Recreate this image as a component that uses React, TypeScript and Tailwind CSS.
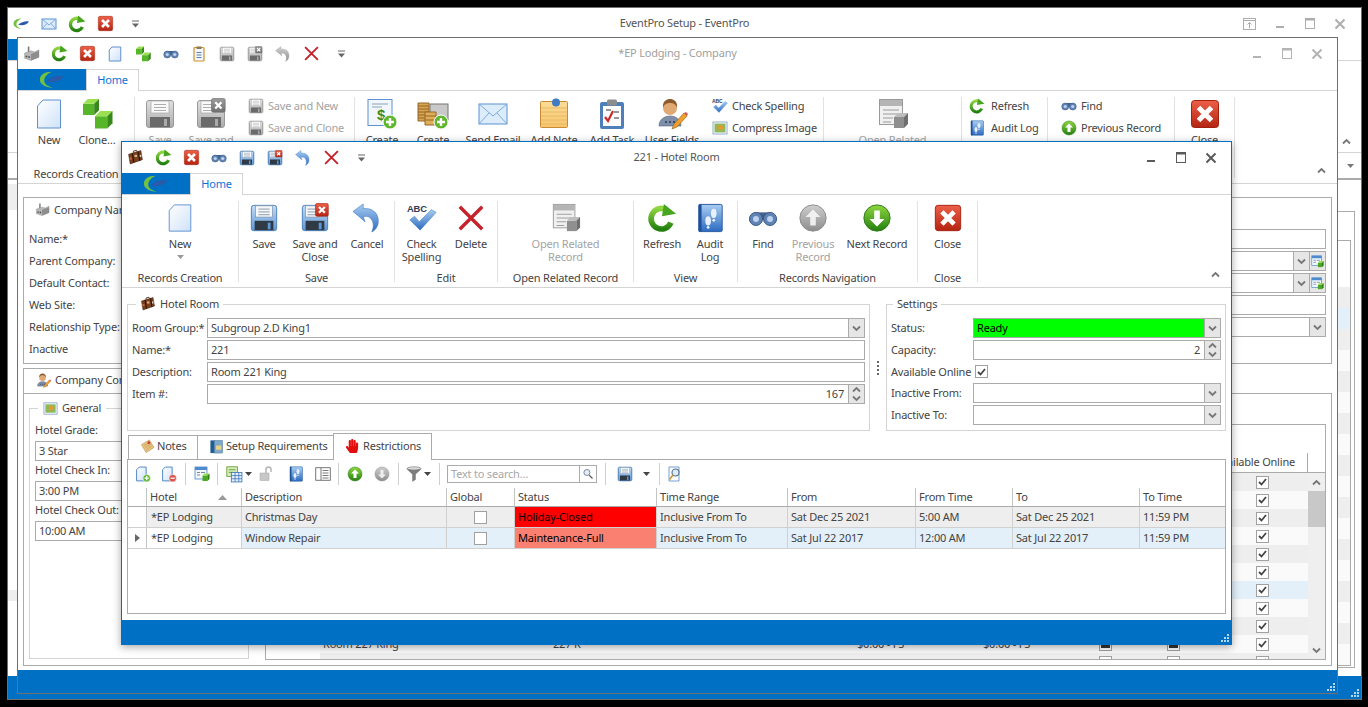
import { ReactNode } from "react";
import { FaHandPaper } from "react-icons/fa";

function Defs() {
  return (
    <svg className="absolute h-0 w-0">
      <defs>
        <linearGradient id="gPage" x1="0" y1="0" x2="1" y2="1">
          <stop offset="0" stopColor="#ffffff" />
          <stop offset="1" stopColor="#cfe2f8" />
        </linearGradient>
        <linearGradient id="gDisk" x1="0" y1="0" x2="0" y2="1">
          <stop offset="0" stopColor="#c4dcf5" />
          <stop offset="1" stopColor="#5e97d6" />
        </linearGradient>
        <linearGradient id="gRed" x1="0" y1="0" x2="0" y2="1">
          <stop offset="0" stopColor="#ee5f48" />
          <stop offset="1" stopColor="#b32412" />
        </linearGradient>
        <linearGradient id="gGreen" x1="0" y1="0" x2="0" y2="1">
          <stop offset="0" stopColor="#8fd63f" />
          <stop offset="1" stopColor="#23800f" />
        </linearGradient>
        <linearGradient id="gGray" x1="0" y1="0" x2="0" y2="1">
          <stop offset="0" stopColor="#cfcfcf" />
          <stop offset="1" stopColor="#8d8d8d" />
        </linearGradient>
        <linearGradient id="gBlue" x1="0" y1="0" x2="0" y2="1">
          <stop offset="0" stopColor="#a9cdf2" />
          <stop offset="1" stopColor="#2c6bc0" />
        </linearGradient>
        <linearGradient id="gNote" x1="0" y1="0" x2="0" y2="1">
          <stop offset="0" stopColor="#fbdc97" />
          <stop offset="1" stopColor="#f6c66c" />
        </linearGradient>
      </defs>
    </svg>
  );
}

type IconProps = { s?: number; off?: boolean };

// thin outlines vanish when the 32-unit drawings are shown at 16px
const line = (s = 32) => (s < 20 ? 2 : 1);

function Svg({ s = 32, off, children, vb = "0 0 32 32" }: IconProps & { children: ReactNode; vb?: string }) {
  return (
    <svg width={s} height={s} viewBox={vb} className={off ? "shrink-0 grayscale opacity-75" : "shrink-0"}>
      {children}
    </svg>
  );
}

const Logo = ({ w = 28 }: { w?: number }) => (
  <svg width={w} height={(w * 20) / 30} viewBox="0 0 30 20" className="shrink-0">
    <path d="M15 1C6 1 1 5 1 10c0 5 6 9 15 9-6-1-10-4-10-8 0-4 4-8 9-10Z" fill="#73c23d" />
    <path d="M9 12c5-5 13-7 19-6-2 5-10 8-19 6Z" fill="#2a5aa8" />
  </svg>
);

const Page = (p: IconProps) => (
  <Svg {...p}>
    <path d="M10 2H27.5V30H4.5V8Z" fill="url(#gPage)" stroke="#5f90cf" strokeWidth={line(p.s)} />
  </Svg>
);

const CubeShape = ({ x, y, k }: { x: number; y: number; k: number }) => (
  <g transform={`translate(${x} ${y}) scale(${k})`}>
    <path d="M0 3H7V10H0Z" fill="#57b52a" />
    <path d="M0 3 3 0H10L7 3Z" fill="#9be04f" />
    <path d="M7 3 10 0V7L7 10Z" fill="#37881a" />
  </g>
);

const Cubes = (p: IconProps) => (
  <Svg {...p}>
    <CubeShape x={2} y={1} k={1.6} />
    <CubeShape x={14} y={13} k={1.75} />
  </Svg>
);

const Disk = (p: IconProps) => (
  <Svg {...p}>
    <rect x="2.5" y="2.5" width="27" height="27" rx="2.5" fill="url(#gDisk)" stroke="#4a7fb9" strokeWidth={line(p.s)} />
    <rect x="7" y="3" width="18" height="12" fill="#f5f7fa" stroke="#7a8ea6" strokeWidth=".7" />
    <path d="M10 6.5H22M10 9.5H22M10 12.5H22" stroke="#8896a6" />
    <rect x="6" y="19" width="20" height="10" fill="#303a44" />
    <rect x="20" y="21" width="3" height="7" fill="#5e97d6" />
  </Svg>
);

const MiniX = ({ x, y, k }: { x: number; y: number; k: number }) => (
  <g transform={`translate(${x} ${y}) scale(${k})`}>
    <rect x=".5" y=".5" width="13" height="13" rx="1.5" fill="url(#gRed)" stroke="#a3200f" strokeWidth=".6" />
    <path d="M4 4l6 6m0-6-6 6" stroke="#fff" strokeWidth="2.2" />
  </g>
);

const DiskX = (p: IconProps) => (
  <Svg {...p}>
    <rect x="2.5" y="2.5" width="27" height="27" rx="2.5" fill="url(#gDisk)" stroke="#4a7fb9" strokeWidth={line(p.s)} />
    <rect x="6" y="3" width="14" height="12" fill="#f5f7fa" stroke="#7a8ea6" strokeWidth=".7" />
    <path d="M8 6.5H18M8 9.5H18M8 12.5H18" stroke="#8896a6" />
    <rect x="6" y="19" width="20" height="10" fill="#303a44" />
    <rect x="20" y="21" width="3" height="7" fill="#5e97d6" />
    <MiniX x={16} y={0} k={1.05} />
  </Svg>
);

const Undo = (p: IconProps) => (
  <Svg {...p}>
    <path
      d="M1 9 12 1V6C22 5 29 11 28 21 27.6 25 25 29 21 31 24 25 23 18 18 15 16 14 14 14 12 15L14 20Z"
      fill="url(#gBlue)"
      stroke="#3f78c4"
      strokeWidth=".6"
    />
  </Svg>
);

const RedX = (p: IconProps) => (
  <Svg {...p}>
    <path d="M4 4 28 28M28 4 4 28" stroke="#c5222b" strokeWidth="3.6" fill="none" />
  </Svg>
);

const CloseBox = (p: IconProps) => (
  <Svg {...p}>
    <rect x="2.5" y="2.5" width="27" height="27" rx="3" fill="url(#gRed)" stroke="#a3200f" />
    <path d="M9.5 9.5 22.5 22.5M22.5 9.5 9.5 22.5" stroke="#fff" strokeWidth="5" />
  </Svg>
);

const Refresh = (p: IconProps) => (
  <Svg {...p}>
    <path d="M20.5 7A11 11 0 1 0 25.5 21" fill="none" stroke="url(#gGreen)" strokeWidth="6" />
    <path d="M18 1 31 11.5 16 14Z" fill="#48a51f" />
  </Svg>
);

const Binoculars = (p: IconProps) => (
  <Svg {...p}>
    <path d="M10 10h12v8H10Z" fill="#43618c" />
    <circle cx="8.5" cy="17" r="7" fill="#5f83b5" stroke="#37557f" />
    <circle cx="23.5" cy="17" r="7" fill="#5f83b5" stroke="#37557f" />
    <circle cx="8.5" cy="17" r="3.2" fill="#bcd2ee" />
    <circle cx="23.5" cy="17" r="3.2" fill="#bcd2ee" />
  </Svg>
);

const ClipboardO = (p: IconProps) => (
  <Svg {...p}>
    <rect x="6" y="3" width="20" height="27" rx="2" fill="#f3f7fc" stroke="#d09225" strokeWidth="2.4" />
    <rect x="11" y="1" width="10" height="5" fill="#8a7a55" />
    <path d="M11 13h10M11 18h10M11 23h10" stroke="#5d7fb5" strokeWidth="2" />
  </Svg>
);

const Suitcase = (p: IconProps) => (
  <Svg {...p}>
    <path d="M3 10 26 3 29 20 6 28Z" fill="#7b3f1b" stroke="#3e1f0c" />
    <path d="M10 8 13 25M21 5 24 22" stroke="#2f1708" strokeWidth="2.4" />
    <path d="M12 7 12 4 18 2.5 19 5" fill="none" stroke="#3e1f0c" strokeWidth="1.6" />
    <rect x="14" y="11" width="5" height="4" fill="#d9b48a" />
    <rect x="5" y="16" width="4" height="4" fill="#c46a3a" />
    <rect x="24" y="11" width="3" height="4" fill="#d9d0c0" />
  </Svg>
);

const Factory = (p: IconProps) => (
  <Svg {...p}>
    <path d="M9 3h3v10H9Z" fill="#777" />
    <path d="M3 15 15 11 22 13 30 9V23L15 29 3 25Z" fill="#b8b8b8" stroke="#666" strokeWidth=".6" />
    <path d="M15 17 30 11V23L15 29Z" fill="#8d8d8d" />
    <path d="M5 20h3v3H5ZM10 21h3v3h-3Z" fill="#444" />
  </Svg>
);

const Mail = (p: IconProps) => (
  <Svg {...p}>
    <rect x="2" y="6" width="28" height="20" fill="#dcecfb" stroke="#5b91d2" strokeWidth={line(p.s)} />
    <path d="M2 6 16 18 30 6M2 26 12 15M30 26 20 15" fill="none" stroke="#7fabdf" strokeWidth={line(p.s)} />
  </Svg>
);

const Plus = ({ minus, x = 24, y = 24 }: { minus?: boolean; x?: number; y?: number }) => (
  <g>
    <circle cx={x} cy={y} r="7" fill={minus ? "#d9534a" : "#5fb82c"} stroke="#fff" />
    <path d={minus ? `M${x - 4} ${y}h8` : `M${x - 4} ${y}h8M${x} ${y - 4}v8`} stroke="#fff" strokeWidth="2.4" />
  </g>
);

const Invoice = (p: IconProps) => (
  <Svg {...p}>
    <rect x="2" y="1.5" width="24" height="26" fill="#f2f7fd" stroke="#5f90cf" />
    <path d="M6 6h16M6 9h10" stroke="#8aa0b8" />
    <text x="11" y="22" fontSize="15" fontWeight="700" fill="#3d8a1e" fontFamily="Liberation Sans, sans-serif">
      $
    </text>
    <Plus />
  </Svg>
);

const Coins = (p: IconProps) => (
  <Svg {...p}>
    <rect x="13" y="6" width="18" height="16" fill="#c9c9c9" stroke="#777" />
    <path d="M1 5h11v18H1Z" fill="#d9a44f" stroke="#94662a" />
    <path d="M1 8h11M1 11h11M1 14h11M1 17h11M1 20h11" stroke="#94662a" />
    <path d="M8 14h11v13H8Z" fill="#e0ae58" stroke="#94662a" />
    <path d="M8 18h11M8 22h11" stroke="#94662a" />
    <Plus />
  </Svg>
);

const Note = (p: IconProps) => (
  <Svg {...p}>
    <rect x="2.5" y="3.5" width="27" height="26" rx="1" fill="url(#gNote)" stroke="#c98a33" />
    <path d="M3 10h26M3 14h26M3 18h26M3 22h26M3 26h26" stroke="#e9b867" />
    <circle cx="18" cy="4.5" r="4" fill="#3d7cc5" />
  </Svg>
);

const Task = (p: IconProps) => (
  <Svg {...p}>
    <rect x="4" y="4" width="24" height="27" rx="2" fill="#4f7fb8" />
    <rect x="7" y="8" width="18" height="20" fill="#fdfdfd" />
    <rect x="11" y="1.5" width="10" height="6" rx="1.5" fill="#8c8c8c" />
    <path d="M9 19 12 23 17 13" fill="none" stroke="#c92a2a" strokeWidth="2.2" />
    <path d="M18 14h5M18 20h5M10 12h5" stroke="#777" strokeWidth="1.4" />
  </Svg>
);

const UserIcon = (p: IconProps) => (
  <Svg {...p}>
    <path d="M3 28C3 21 9 18 14 18s11 3 11 10Z" fill="#7f8fa9" stroke="#566379" strokeWidth=".6" />
    <circle cx="14" cy="10" r="7" fill="#e0a873" />
    <path d="M7 10C6 3 11 1 14 1s8 2 7 9C20 6 17 5 14 5S8 6 7 10Z" fill="#8e5a2b" />
    <path d="M9 24h2M13 24h2M17 24h2" stroke="#3b4d6b" strokeWidth="2" />
    <path d="M16 31 18 26 28 15 31 18 21 29Z" fill="#f2a02c" stroke="#8a5a10" strokeWidth=".6" />
    <path d="M28 15 31 18 32 16 30 14Z" fill="#d65a5a" />
  </Svg>
);

const AbcCheck = (p: IconProps) => (
  <Svg {...p}>
    <text x="0" y="10" fontSize="10" fontWeight="700" fill="#333c55" fontFamily="Liberation Sans, sans-serif">
      ABC
    </text>
    <path d="M3 18 8 14 13 20 26 7 31 10 14 29Z" fill="url(#gBlue)" stroke="#4a80c4" strokeWidth=".6" />
  </Svg>
);

const Picture = (p: IconProps) => (
  <Svg {...p}>
    <rect x="2" y="4" width="28" height="24" fill="#fff" stroke="#6a8fc0" strokeWidth="1.5" />
    <rect x="5" y="7" width="22" height="18" fill="#8fb85a" />
    <circle cx="17" cy="15" r="5" fill="#e39a2f" />
  </Svg>
);

const Related = (p: IconProps) => (
  <Svg {...p}>
    <rect x="2.5" y="1.5" width="23" height="25" fill="#f0f0f0" stroke="#9a9a9a" />
    <rect x="3" y="2" width="22" height="6" fill="#b5b5b5" />
    <path d="M6 12h16M6 16h16M6 20h10M6 24h8" stroke="#9a9a9a" />
    <path d="M17 19h10v11H17Z" fill="#8f8f8f" />
    <path d="M17 19l4-4h10l-4 4Z" fill="#bdbdbd" />
    <path d="M27 19l4-4v11l-4 4Z" fill="#6f6f6f" />
  </Svg>
);

const ArrowBall = ({ up, gray, ...p }: IconProps & { up?: boolean; gray?: boolean }) => (
  <Svg {...p}>
    <circle cx="16" cy="16" r="14" fill={gray ? "url(#gGray)" : "url(#gGreen)"} stroke={gray ? "#8a8a8a" : "#2a7a14"} />
    {up ? (
      <path d="M16 7 24 15H19V24H13V15H8Z" fill="#fff" opacity={gray ? 0.8 : 1} />
    ) : (
      <path d="M16 25 8 17H13V8H19V17H24Z" fill="#fff" opacity={gray ? 0.8 : 1} />
    )}
  </Svg>
);

const AuditBook = (p: IconProps) => (
  <Svg {...p}>
    <rect x="4" y="1.5" width="25" height="29" rx="1.5" fill="url(#gBlue)" stroke="#24589f" />
    <rect x="4" y="1.5" width="3" height="29" fill="#1f4f95" />
    <ellipse cx="20" cy="11" rx="3" ry="5" fill="#e9f1fb" />
    <ellipse cx="14" cy="19" rx="3" ry="5" fill="#e9f1fb" />
    <circle cx="20" cy="18.5" r="1.5" fill="#e9f1fb" />
    <circle cx="14" cy="26" r="1.5" fill="#e9f1fb" />
  </Svg>
);

const NotesIcon = (p: IconProps) => (
  <Svg {...p}>
    <path d="M3 12 20 2 30 18 13 29Z" fill="#e7c27e" stroke="#a37a3a" />
    <path d="M9 14 21 7M11 18 23 11M14 22 25 15" stroke="#b68f4e" />
    <circle cx="19" cy="8" r="3" fill="#c9423a" />
  </Svg>
);

const SetupIcon = (p: IconProps) => (
  <Svg {...p}>
    <rect x="3" y="3" width="9" height="27" fill="#1f5d95" />
    <rect x="12" y="3" width="17" height="27" fill="#7fa8c9" stroke="#4c7699" />
    <rect x="15" y="14" width="11" height="9" fill="#e6d48c" />
  </Svg>
);

const GreenTable = (p: IconProps) => (
  <Svg {...p}>
    <rect x="2" y="2" width="24" height="24" fill="#f2f7fd" stroke="#3f7dc2" strokeWidth="1.5" />
    <rect x="2" y="2" width="24" height="6" fill="#4d8bd0" />
    <path d="M6 13h6M6 18h6M14 13h8" stroke="#7a8a9a" strokeWidth="2" />
    <path d="M17 19h10v11H17Z" fill="#4aa824" />
    <path d="M17 19l4-4h10l-4 4Z" fill="#96dc4c" />
    <path d="M27 19l4-4v11l-4 4Z" fill="#2e7f14" />
  </Svg>
);

const DocBadge = ({ minus, ...p }: IconProps & { minus?: boolean }) => (
  <Svg {...p}>
    <path d="M8 2H21V28H3V7Z" fill="url(#gPage)" stroke="#4f82c4" strokeWidth="1.8" />
    <Plus minus={minus} x={22} y={23} />
  </Svg>
);

const Layouts = (p: IconProps) => (
  <Svg {...p}>
    <rect x="1.5" y="1.5" width="20" height="18" fill="#d6ecbb" stroke="#5e9a2c" strokeWidth="1.5" />
    <path d="M5 7h13M5 12h8" stroke="#5e9a2c" strokeWidth="1.6" />
    <rect x="10" y="12" width="20" height="18" fill="#e6f0fb" stroke="#356fb8" strokeWidth="1.5" />
    <path d="M10 18h20M10 24h20M17 12v18M24 12v18" stroke="#356fb8" strokeWidth="1.4" />
  </Svg>
);

const Lock = (p: IconProps) => (
  <Svg {...p}>
    <rect x="2" y="14" width="18" height="15" fill="#c7c7c7" stroke="#a8a8a8" />
    <path d="M14 14V7a5 5 0 0 1 10 0v5" fill="none" stroke="#b5b5b5" strokeWidth="3" />
  </Svg>
);

const PanelList = (p: IconProps) => (
  <Svg {...p}>
    <rect x="1.5" y="3.5" width="29" height="25" fill="#fff" stroke="#555" strokeWidth="1.6" />
    <path d="M12 4v24" stroke="#555" strokeWidth="1.6" />
    <path d="M15 9h12M15 14h12M15 19h12M15 24h12" stroke="#555" strokeWidth="1.6" />
  </Svg>
);

const Funnel = (p: IconProps) => (
  <Svg {...p}>
    <ellipse cx="16" cy="5" rx="14" ry="3.5" fill="#d9d9d9" stroke="#5c5c5c" />
    <path d="M2 6C6 11 12 15 13 17V31L19 27V17C20 15 26 11 30 6 26 9 6 9 2 6Z" fill="#7d7d7d" stroke="#555" strokeWidth=".6" />
  </Svg>
);

const Magnify = (p: IconProps) => (
  <Svg {...p}>
    <circle cx="13" cy="12" r="8" fill="#e3eefa" stroke="#6d7f93" strokeWidth="2.4" />
    <path d="M19 19 28 28" stroke="#5c5c5c" strokeWidth="3.4" />
  </Svg>
);

const DocFind = (p: IconProps) => (
  <Svg {...p}>
    <path d="M4 2H24V30H4Z" fill="#fdfdfd" stroke="#4f82c4" strokeWidth="1.5" />
    <circle cx="17" cy="13" r="7" fill="#ddebf8" stroke="#50708f" strokeWidth="2.2" />
    <path d="M12 18 5 27" stroke="#c79a3a" strokeWidth="3.2" />
  </Svg>
);

const Chevron = ({ up, color = "#777" }: { up?: boolean; color?: string }) => (
  <svg width="9" height="7" viewBox="0 0 9 7" className="shrink-0">
    <path d={up ? "M1 5.5 4.5 2 8 5.5" : "M1 1.5 4.5 5 8 1.5"} fill="none" stroke={color} strokeWidth="1.8" />
  </svg>
);

const Caret = ({ color = "#666" }: { color?: string }) => (
  <svg width="7" height="4" viewBox="0 0 7 4" className="shrink-0">
    <path d="M0 0H7L3.5 4Z" fill={color} />
  </svg>
);

const QatMore = () => (
  <svg width="7" height="8" viewBox="0 0 7 8" className="shrink-0">
    <path d="M0 1H7" stroke="#666" />
    <path d="M0 3.5H7L3.5 7.5Z" fill="#666" />
  </svg>
);

const Grip = () => (
  <svg width="10" height="10" viewBox="0 0 10 10" className="shrink-0">
    <path d="M7 1h2v2H7ZM4 4h2v2H4ZM7 4h2v2H7ZM1 7h2v2H1ZM4 7h2v2H4ZM7 7h2v2H7Z" fill="#b9d6ef" />
  </svg>
);

function WinButtons({ color, wide }: { color: string; wide?: boolean }) {
  return (
    <div className={`flex items-center justify-end ${wide ? "pr-[6px]" : "pr-[5px]"}`}>
      {wide && (
        <svg width="13" height="12" viewBox="0 0 13 12" className="mr-[9px]">
          <rect x=".5" y=".5" width="12" height="11" fill="none" stroke={color} />
          <path d="M1 2.5H12M6.5 10V4.5M4.5 6.5 6.5 4.5 8.5 6.5" fill="none" stroke={color} />
        </svg>
      )}
      <svg width="30" height="12" viewBox="0 0 30 12">
        <path d="M11 9H19" stroke={color} strokeWidth="2" />
      </svg>
      <svg width="30" height="12" viewBox="0 0 30 12">
        <rect x="10.5" y=".5" width="9" height="10" fill="none" stroke={color} />
        <path d="M10 1.5H20" stroke={color} strokeWidth="2" />
      </svg>
      <svg width="30" height="12" viewBox="0 0 30 12">
        <path d="M10.5 1.5 19.5 10.5M19.5 1.5 10.5 10.5" stroke={color} strokeWidth="2" />
      </svg>
    </div>
  );
}

function BigBtn({ icon, label, className, off, caret, tall }: { icon: ReactNode; label: ReactNode; className: string; off?: boolean; caret?: boolean; tall?: boolean }) {
  return (
    <div className={`flex flex-col items-center ${className}`}>
      {icon}
      <div className={`text-center leading-[13px] ${tall ? "mt-[4px]" : "mt-[3px]"} ${off ? "text-[#a3a3a3]" : ""}`}>{label}</div>
      {caret && (
        <div className="mt-[5px]">
          <Caret color="#999" />
        </div>
      )}
    </div>
  );
}

function SmallBtn({ icon, label, off, gap = "gap-[4px]" }: { icon: ReactNode; label: string; off?: boolean; gap?: string }) {
  return (
    <div className={`flex h-[16px] items-center whitespace-nowrap ${gap} ${off ? "text-[#a3a3a3]" : ""}`}>
      {icon}
      {label}
    </div>
  );
}

function Group({ title, className, inner = "", children, tall }: { title: string; className: string; inner?: string; children: ReactNode; tall?: boolean }) {
  return (
    <div className={`flex h-[81px] shrink-0 flex-col border-r border-[#e2e2e2] ${className}`}>
      <div className={`flex ${tall ? "pt-[2px]" : "pt-[1px]"} ${inner}`}>{children}</div>
      <div className="-mb-[3px] mt-auto h-[14px] whitespace-nowrap text-center leading-[14px]">{title}</div>
    </div>
  );
}

const Sep = ({ className = "" }: { className?: string }) => <div className={`h-[22px] w-px shrink-0 bg-[#d0d0d0] ${className}`} />;

function DropBtn() {
  return (
    <div className="flex h-full w-[16px] shrink-0 items-center justify-center border-l border-[#ababab] bg-[#e6e6e6]">
      <Chevron />
    </div>
  );
}

function Field({ text, right, drop, lookup, spin, green, className = "" }: { text?: string; right?: boolean; drop?: boolean; lookup?: boolean; spin?: boolean; green?: boolean; className?: string }) {
  return (
    <div className={`flex h-[20px] items-center border border-[#ababab] bg-white ${className}`}>
      <div className={`flex h-full flex-1 items-center px-[3px] ${right ? "justify-end pr-[4px]" : ""} ${green ? "bg-[#00ff00] text-black" : ""}`}>{text}</div>
      {drop && <DropBtn />}
      {spin && (
        <div className="flex h-full w-[16px] flex-col items-center justify-center gap-[2px] border-l border-[#ababab] bg-[#e6e6e6]">
          <Chevron up />
          <Chevron />
        </div>
      )}
      {lookup && (
        <div className="flex h-full w-[16px] items-center justify-center border-l border-[#ababab] bg-[#e6e6e6]">
          <GreenTable s={13} />
        </div>
      )}
    </div>
  );
}

function Check({ on }: { on?: boolean }) {
  return (
    <div className="flex h-[13px] w-[13px] shrink-0 items-center justify-center border border-[#a0a0a0] bg-white">
      {on && (
        <svg width="9" height="8" viewBox="0 0 9 8">
          <path d="M1 4 3.5 6.5 8 1" fill="none" stroke="#444" strokeWidth="1.8" />
        </svg>
      )}
    </div>
  );
}

function DarkCheck() {
  return (
    <div className="flex h-[13px] w-[13px] shrink-0 items-center justify-center border border-[#a0a0a0] bg-white">
      <div className="h-[7px] w-[9px] bg-[#333]" />
    </div>
  );
}

function TitleBar({ title, titleClass, btnColor, wide, children }: { title: string; titleClass: string; btnColor: string; wide?: boolean; children: ReactNode }) {
  return (
    <div className="grid h-[31px] shrink-0 grid-cols-[1fr_auto_1fr] items-center">
      <div className="-ml-px flex items-center">{children}</div>
      <div className={`pb-[1px] ${titleClass}`}>{title}</div>
      <WinButtons color={btnColor} wide={wide} />
    </div>
  );
}

function RibbonTabs() {
  return (
    <div className="flex h-[22px] shrink-0 border-b border-[#d4d4d4]">
      <div className="flex h-[21px] w-[68px] items-center justify-center bg-[#0070c5]">
        <Logo w={26} />
      </div>
      <div className="-mb-px flex h-[22px] w-[53px] items-center justify-center border-x border-t border-[#d4d4d4] bg-white text-[#0a74d6]">Home</div>
    </div>
  );
}

const Qi = ({ children, w = "w-[28px]" }: { children: ReactNode; w?: string }) => <div className={`flex shrink-0 items-center justify-center ${w}`}>{children}</div>;

function MainWindow() {
  const sideRows = [0, 1, 2, 3, 4, 5, 6, 7, 8, 9, 10, 11, 12, 13, 14, 15, 16, 17];
  return (
    <div className="absolute left-[7px] top-[7px] flex h-[693px] w-[1355px] flex-col border border-[#6f6f6f] bg-white">
      <TitleBar title="EventPro Setup - EventPro" titleClass="text-[#555]" btnColor="#adadad" wide>
        <Qi>
          <Logo w={17} />
        </Qi>
        <Qi>
          <Mail s={16} />
        </Qi>
        <Qi>
          <Refresh s={18} />
        </Qi>
        <Qi>
          <CloseBox s={17} />
        </Qi>
        <Qi w="w-[32px]">
          <QatMore />
        </Qi>
      </TitleBar>
      <RibbonTabs />
      <div className="flex h-[92px] shrink-0 items-end justify-end border-b border-[#d4d4d4] pb-[7px] pr-[10px]">
        <Chevron up />
      </div>
      <div className="flex h-[27px] shrink-0 items-center justify-end border-b-2 border-[#aaaaaa] pr-[7px]">
        <Caret color="#777" />
      </div>
      <div className="flex flex-1 justify-between overflow-hidden">
        <div className="flex w-[9px] flex-col pt-[4px]">
          <div className="h-[26px] bg-[#eeeeee]" />
          <div className="mt-[380px] h-[11px] bg-[#eeeeee]" />
        </div>
        <div className="mb-[8px] mr-[6px] mt-[31px] w-[17px] border-b border-r border-t border-[#ababab]">
          <div className="mr-[3px] mt-[28px] h-[426px] overflow-hidden border-b border-r border-t border-[#ababab] pt-[46px]">
            {sideRows.map((r) => (
              <div key={r} className={`h-[21px] ${r === 1 ? "bg-[#e3eff9]" : r % 2 === 0 ? "bg-[#eeeeee]" : "bg-[#fafafa]"}`} />
            ))}
          </div>
        </div>
      </div>
      <div className="flex h-[23px] shrink-0 items-end justify-end bg-[#0070c5] pb-[1px] pr-[1px]">
        <Grip />
      </div>
    </div>
  );
}

function CompanyRibbon() {
  return (
    <div className="flex h-[93px] shrink-0 items-start border-b border-[#d4d4d4] pt-[6px]">
      <Group title="Records Creation" className="w-[117px]" inner="pl-[12px]">
        <BigBtn className="w-[38px]" icon={<Page />} label="New" />
        <BigBtn className="w-[58px]" icon={<Cubes />} label="Clone…" />
      </Group>
      <Group title="Save" className="w-[220px]" inner="pl-[5px]">
        <BigBtn off className="w-[40px]" icon={<Disk off />} label="Save" />
        <BigBtn off className="w-[62px]" icon={<DiskX off />} label="Save and" />
        <div className="ml-[6px] flex flex-col gap-[6px]">
          <SmallBtn off icon={<Disk s={16} off />} label="Save and New" />
          <SmallBtn off icon={<Disk s={16} off />} label="Save and Clone" />
        </div>
      </Group>
      <Group title="Create" className="w-[469px]" inner="pl-[3px]">
        <BigBtn className="w-[48px]" icon={<Invoice />} label="Create" />
        <BigBtn className="w-[54px]" icon={<Coins />} label="Create" />
        <BigBtn className="w-[66px]" icon={<Mail />} label="Send Email" />
        <BigBtn className="w-[56px]" icon={<Note />} label="Add Note" />
        <BigBtn className="w-[60px]" icon={<Task />} label="Add Task" />
        <BigBtn className="w-[60px]" icon={<UserIcon />} label="User Fields" />
        <div className="ml-[10px] flex flex-col gap-[6px]">
          <SmallBtn icon={<AbcCheck s={16} />} label="Check Spelling" />
          <SmallBtn icon={<Picture s={16} />} label="Compress Image" />
        </div>
      </Group>
      <Group title="Open Related Record" className="w-[138px] items-center">
        <BigBtn off className="w-[120px]" icon={<Related />} label="Open Related" />
      </Group>
      <Group title="View" className="w-[86px]" inner="pl-[7px]">
        <div className="flex flex-col gap-[6px]">
          <SmallBtn gap="gap-[6px]" icon={<Refresh s={16} />} label="Refresh" />
          <SmallBtn gap="gap-[6px]" icon={<AuditBook s={16} />} label="Audit Log" />
        </div>
      </Group>
      <Group title="Records Navigation" className="w-[127px]" inner="pl-[13px]">
        <div className="flex flex-col gap-[6px]">
          <SmallBtn icon={<Binoculars s={16} />} label="Find" />
          <SmallBtn icon={<ArrowBall up s={16} />} label="Previous Record" />
        </div>
      </Group>
      <Group title="Close" className="w-[60px] items-center">
        <BigBtn className="w-[50px]" icon={<CloseBox />} label="Close" />
      </Group>
      <div className="ml-auto mr-[11px] mt-[70px]">
        <Chevron up />
      </div>
    </div>
  );
}

function CompanyForm() {
  const rows = [
    { label: "Name:*", field: <Field /> },
    { label: "Parent Company:", field: <Field drop lookup /> },
    { label: "Default Contact:", field: <Field drop lookup /> },
    { label: "Web Site:", field: <Field /> },
    { label: "Relationship Type:", field: <Field drop /> },
    { label: "Inactive", field: <div className="h-[20px]" /> },
  ];
  const gridRows = [0, 1, 2, 3, 4, 5, 6, 7, 8, 9, 10];
  return (
    <div className="flex flex-1 flex-col overflow-hidden px-[5px] pt-[13px]">
      <div className="h-[167px] shrink-0 border border-[#ababab] px-[5px]">
        <div className="flex h-[31px] items-start gap-[4px] pl-[6px] pt-[4px]">
          <Factory s={15} />
          Company Name
        </div>
        <div className="flex flex-col gap-[2px]">
          {rows.map((r) => (
            <div key={r.label} className="grid grid-cols-[96px_1fr] items-center">
              <div className="whitespace-nowrap">{r.label}</div>
              {r.field}
            </div>
          ))}
        </div>
      </div>
      <div className="mt-[4px] flex h-[298px] shrink-0 flex-col">
        <div className="flex h-[25px] shrink-0">
          <div className="flex w-[110px] items-center gap-[4px] whitespace-nowrap border-l border-t border-[#ababab] pb-[2px] pl-[12px]">
            <UserIcon s={15} />
            Company Contact
          </div>
        </div>
        <div className="flex min-h-0 flex-1 border border-[#ababab] pl-[5px]">
          <fieldset className="mt-[6px] h-[259px] w-[220px] shrink-0 border border-[#d4d4d4] px-[5px]">
            <legend className="ml-[3px] flex h-[16px] items-center gap-[4px] px-[5px]">
              <Picture s={15} />
              General
            </legend>
            <div className="mt-[6px] flex flex-col">
              <div className="h-[15px] whitespace-nowrap leading-[15px]">Hotel Grade:</div>
              <Field text="3 Star" className="mt-[4px]" />
              <div className="h-[18px] whitespace-nowrap leading-[18px]">Hotel Check In:</div>
              <Field text="3:00 PM" className="mt-[2px]" />
              <div className="h-[18px] whitespace-nowrap leading-[18px]">Hotel Check Out:</div>
              <Field text="10:00 AM" className="mt-[2px]" />
            </div>
          </fieldset>
          <div className="ml-[16px] mr-[5px] mt-[30px] flex h-[236px] flex-1 flex-col overflow-hidden border border-[#ababab]">
            <div className="h-[28px] shrink-0" />
            <div className="flex h-[20px] shrink-0 items-center justify-end border-b border-[#ababab]">
              <div className="flex h-full items-center whitespace-nowrap border-r border-[#ababab] pr-[12px]">Available Online</div>
              <div className="w-[17px]" />
            </div>
            <div className="flex min-h-0 flex-1">
              <div className="w-[54px] shrink-0" />
              <div className="min-w-0 flex-1">
                {gridRows.map((r) => (
                  <div key={r} className={`flex h-[18px] items-center whitespace-nowrap ${r === 6 ? "bg-[#e3eff9]" : r % 2 === 0 ? "bg-[#eeeeee]" : "bg-[#fafafa]"}`}>
                    <div className="w-[233px] pl-[3px]">{r === 9 ? "Room 227 King" : ""}</div>
                    <div className="w-[304px]">{r === 9 ? "227 K" : ""}</div>
                    <div className="w-[126px]">{r === 9 ? "$0.00 - FS" : ""}</div>
                    <div className="w-[116px]">{r === 9 ? "$0.00 - FS" : ""}</div>
                    <DarkCheck />
                    <div className="w-[55px]" />
                    <DarkCheck />
                    <div className="w-[76px]" />
                    <Check on />
                  </div>
                ))}
              </div>
              <div className="flex w-[17px] shrink-0 flex-col items-center bg-[#efefef]">
                <div className="flex h-[18px] w-full items-center justify-center">
                  <Chevron up />
                </div>
                <div className="h-[36px] w-full bg-[#c8c8c8]" />
                <div className="mt-auto flex h-[18px] w-full items-center justify-center">
                  <Chevron />
                </div>
              </div>
            </div>
          </div>
        </div>
      </div>
    </div>
  );
}

function CompanyWindow() {
  return (
    <div className="absolute left-[17px] top-[37px] flex h-[657px] w-[1321px] flex-col border border-[#6f6f6f] bg-white">
      <TitleBar title="*EP Lodging - Company" titleClass="text-[#a0a0a0]" btnColor="#b4b4b4">
        <Qi>
          <Factory s={17} />
        </Qi>
        <Qi>
          <Refresh s={17} />
        </Qi>
        <Qi>
          <CloseBox s={17} />
        </Qi>
        <Qi>
          <Page s={16} />
        </Qi>
        <Qi>
          <Cubes s={16} />
        </Qi>
        <Qi>
          <Binoculars s={16} />
        </Qi>
        <Qi>
          <ClipboardO s={16} />
        </Qi>
        <Qi>
          <Disk s={16} off />
        </Qi>
        <Qi>
          <DiskX s={16} off />
        </Qi>
        <Qi>
          <Undo s={16} off />
        </Qi>
        <Qi>
          <RedX s={17} />
        </Qi>
        <Qi w="w-[32px]">
          <QatMore />
        </Qi>
      </TitleBar>
      <RibbonTabs />
      <CompanyRibbon />
      <CompanyForm />
      <div className="flex h-[23px] shrink-0 items-end justify-end bg-[#0070c5] pb-[1px] pr-[1px]">
        <Grip />
      </div>
    </div>
  );
}

function HotelRibbon() {
  return (
    <div className="flex h-[93px] shrink-0 items-start border-b border-[#d4d4d4] pt-[6px]">
      <Group tall title="Records Creation" className="w-[117px] items-center">
        <BigBtn tall caret className="w-[60px]" icon={<Page s={30} />} label="New" />
      </Group>
      <Group tall title="Save" className="w-[156px]">
        <BigBtn tall className="w-[50px]" icon={<Disk s={30} />} label="Save" />
        <BigBtn tall className="w-[52px]" icon={<DiskX s={30} />} label={<>Save and<br />Close</>} />
        <BigBtn tall className="w-[52px]" icon={<Undo s={30} />} label="Cancel" />
      </Group>
      <Group tall title="Edit" className="w-[103px]">
        <BigBtn tall className="w-[53px]" icon={<AbcCheck s={30} />} label={<>Check<br />Spelling</>} />
        <BigBtn tall className="w-[46px]" icon={<RedX s={30} />} label="Delete" />
      </Group>
      <Group tall title="Open Related Record" className="w-[136px] items-center">
        <BigBtn tall off className="w-[120px]" icon={<Related s={30} />} label={<>Open Related<br />Record</>} />
      </Group>
      <Group tall title="View" className="w-[104px]">
        <BigBtn tall className="w-[56px]" icon={<Refresh s={30} />} label="Refresh" />
        <BigBtn tall className="w-[40px]" icon={<AuditBook s={30} />} label={<>Audit<br />Log</>} />
      </Group>
      <Group tall title="Records Navigation" className="w-[180px]">
        <BigBtn tall className="w-[50px]" icon={<Binoculars s={30} />} label="Find" />
        <BigBtn tall off className="w-[50px]" icon={<ArrowBall up gray s={30} />} label={<>Previous<br />Record</>} />
        <BigBtn tall className="w-[78px]" icon={<ArrowBall s={30} />} label="Next Record" />
      </Group>
      <Group tall title="Close" className="w-[60px] items-center">
        <BigBtn tall className="w-[50px]" icon={<CloseBox s={30} />} label="Close" />
      </Group>
      <div className="ml-auto mr-[11px] mt-[70px]">
        <Chevron up />
      </div>
    </div>
  );
}

function HotelForm() {
  return (
    <div className="flex shrink-0 px-[5px] pt-[8px]">
      <fieldset className="h-[135px] w-[743px] shrink-0 border border-[#d4d4d4] px-[4px]">
        <legend className="ml-[4px] flex h-[16px] items-center gap-[4px] px-[4px]">
          <Suitcase s={16} />
          Hotel Room
        </legend>
        <div className="mt-[6px] flex flex-col gap-[2px]">
          <div className="grid grid-cols-[75px_1fr] items-center">
            <div className="whitespace-nowrap">Room Group:*</div>
            <Field text="Subgroup 2.D King1" drop />
          </div>
          <div className="grid grid-cols-[75px_1fr] items-center">
            <div>Name:*</div>
            <Field text="221" />
          </div>
          <div className="grid grid-cols-[75px_1fr] items-center">
            <div>Description:</div>
            <Field text="Room 221 King" />
          </div>
          <div className="grid grid-cols-[75px_1fr] items-center">
            <div>Item #:</div>
            <Field text="167" right spin />
          </div>
        </div>
      </fieldset>
      <div className="flex w-[16px] shrink-0 flex-col items-center justify-center gap-[2px] pt-[8px]">
        <div className="h-[2px] w-[2px] bg-[#666]" />
        <div className="h-[2px] w-[2px] bg-[#666]" />
        <div className="h-[2px] w-[2px] bg-[#666]" />
        <div className="h-[2px] w-[2px] bg-[#666]" />
      </div>
      <fieldset className="h-[135px] w-[340px] shrink-0 border border-[#d4d4d4] px-[4px]">
        <legend className="ml-[2px] flex h-[16px] items-center px-[4px]">Settings</legend>
        <div className="mt-[6px] flex flex-col">
          <div className="grid grid-cols-[82px_1fr] items-center">
            <div>Status:</div>
            <Field text="Ready" green drop />
          </div>
          <div className="mt-[2px] grid grid-cols-[82px_1fr] items-center">
            <div>Capacity:</div>
            <Field text="2" right spin />
          </div>
          <div className="mt-[2px] grid h-[19px] grid-cols-[84px_1fr] items-center">
            <div className="whitespace-nowrap pt-[1px]">Available Online</div>
            <Check on />
          </div>
          <div className="mt-[2px] grid grid-cols-[82px_1fr] items-center">
            <div>Inactive From:</div>
            <Field drop />
          </div>
          <div className="mt-[2px] grid grid-cols-[82px_1fr] items-center">
            <div>Inactive To:</div>
            <Field drop />
          </div>
        </div>
      </fieldset>
    </div>
  );
}

function Toolbar() {
  return (
    <div className="flex h-[28px] shrink-0 items-center pl-[2px]">
      <Qi w="w-[26px]">
        <DocBadge s={17} />
      </Qi>
      <Qi w="w-[27px]">
        <DocBadge s={17} minus />
      </Qi>
      <Sep className="ml-[2px]" />
      <Qi w="w-[31px]">
        <GreenTable s={16} />
      </Qi>
      <Sep />
      <div className="flex w-[34px] shrink-0 items-center pl-[8px]">
        <Layouts s={17} />
        <div className="ml-[2px]">
          <Caret color="#444" />
        </div>
      </div>
      <Qi w="w-[30px]">
        <Lock s={16} />
      </Qi>
      <Qi w="w-[27px]">
        <AuditBook s={16} />
      </Qi>
      <Qi w="w-[27px]">
        <PanelList s={16} />
      </Qi>
      <Sep className="ml-[2px]" />
      <Qi w="w-[32px]">
        <ArrowBall up s={16} />
      </Qi>
      <Qi w="w-[21px]">
        <ArrowBall gray s={16} />
      </Qi>
      <Sep className="ml-[6px]" />
      <div className="flex w-[32px] shrink-0 items-center pl-[7px]">
        <Funnel s={16} />
        <div className="ml-[2px]">
          <Caret color="#444" />
        </div>
      </div>
      <Sep className="ml-[8px]" />
      <div className="ml-[7px] flex h-[18px] w-[150px] shrink-0 items-center border border-[#ababab] pl-[3px] text-[#a8a8a8]">
        <div className="flex-1">Text to search…</div>
        <div className="flex h-full w-[17px] items-center justify-center border-l border-[#ababab]">
          <Magnify s={12} />
        </div>
      </div>
      <Sep className="ml-[8px]" />
      <div className="flex w-[46px] shrink-0 items-center pl-[11px]">
        <Disk s={16} />
        <div className="ml-[10px]">
          <Caret color="#444" />
        </div>
      </div>
      <Sep className="ml-[7px]" />
      <div className="pl-[7px]">
        <DocFind s={16} />
      </div>
    </div>
  );
}

const cols = ["Hotel", "Description", "Global", "Status", "Time Range", "From", "From Time", "To", "To Time"];
const rows = [
  { desc: "Christmas Day", status: "Holiday-Closed", statusBg: "bg-[#ff0000]", from: "Sat Dec 25 2021", fromT: "5:00 AM", to: "Sat Dec 25 2021", toT: "11:59 PM", bg: "bg-[#eeeeee]", hotelBg: "bg-[#eeeeee]", current: false },
  { desc: "Window Repair", status: "Maintenance-Full", statusBg: "bg-[#fa8072]", from: "Sat Jul 22 2017", fromT: "12:00 AM", to: "Sat Jul 22 2017", toT: "11:59 PM", bg: "bg-[#e3eff9]", hotelBg: "bg-white", current: true },
];
const gridCols = "grid grid-cols-[19px_95px_205px_68px_142px_131px_128px_97px_127px_85px]";

function RestrictionsGrid() {
  return (
    <div className="flex-1">
      <div className={`${gridCols} h-[19px] border-b border-[#ababab]`}>
        <div className="border-r border-[#c4c4c4]" />
        {cols.map((c, i) => (
          <div key={c} className={`flex items-center justify-between pl-[3px] pr-[14px] ${i < 8 ? "border-r border-[#c4c4c4]" : ""}`}>
            {c}
            {i === 0 && (
              <svg width="9" height="5" viewBox="0 0 9 5">
                <path d="M0 5H9L4.5 0Z" fill="#999" />
              </svg>
            )}
          </div>
        ))}
      </div>
      {rows.map((r) => (
        <div key={r.desc} className={`${gridCols} h-[21px] border-b border-[#d0d0d0] ${r.bg}`}>
          <div className="flex items-center justify-center border-r border-[#c4c4c4] bg-white">
            {r.current && (
              <svg width="5" height="8" viewBox="0 0 5 8">
                <path d="M0 0 5 4 0 8Z" fill="#666" />
              </svg>
            )}
          </div>
          <div className={`flex items-center border-r border-[#d0d0d0] pl-[4px] ${r.hotelBg}`}>*EP Lodging</div>
          <div className="flex items-center border-r border-[#d0d0d0] pl-[3px]">{r.desc}</div>
          <div className="flex items-center justify-center border-r border-[#d0d0d0]">
            <Check />
          </div>
          <div className={`flex items-center border-r border-[#d0d0d0] pl-[3px] text-black ${r.statusBg}`}>{r.status}</div>
          <div className="flex items-center border-r border-[#d0d0d0] pl-[3px]">Inclusive From To</div>
          <div className="flex items-center border-r border-[#d0d0d0] pl-[3px]">{r.from}</div>
          <div className="flex items-center border-r border-[#d0d0d0] pl-[3px]">{r.fromT}</div>
          <div className="flex items-center border-r border-[#d0d0d0] pl-[3px]">{r.to}</div>
          <div className="flex items-center pl-[3px]">{r.toT}</div>
        </div>
      ))}
    </div>
  );
}

function HotelTabs() {
  const tabBase = "flex items-center whitespace-nowrap border border-[#ababab] bg-white pb-[2px]";
  return (
    <div className="mt-[2px] flex flex-1 flex-col px-[5px]">
      <div className="flex h-[26px] shrink-0 items-end pl-[1px]">
        <div className={`${tabBase} h-[24px] w-[69px] gap-[2px] border-b-0 border-r-0 pl-[11px]`}>
          <NotesIcon s={15} />
          Notes
        </div>
        <div className={`${tabBase} h-[24px] w-[137px] gap-[2px] border-b-0 pl-[11px]`}>
          <SetupIcon s={15} />
          Setup Requirements
        </div>
        <div className={`${tabBase} relative -mb-px ml-[-1px] h-[27px] w-[99px] gap-[4px] border-b-0 pl-[11px]`}>
          <FaHandPaper size={14} color="#e30d0d" />
          Restrictions
        </div>
      </div>
      <div className="mb-[6px] flex h-[155px] shrink-0 flex-col border border-[#ababab]">
        <Toolbar />
        <RestrictionsGrid />
      </div>
    </div>
  );
}

function HotelWindow() {
  return (
    <div className="absolute left-[121px] top-[141px] flex h-[504px] w-[1111px] flex-col border border-[#0070c5] bg-white shadow-[0_2px_8px_rgba(0,0,0,0.35)]">
      <TitleBar title="221 - Hotel Room" titleClass="text-[#555]" btnColor="#5a5a5a">
        <Qi>
          <Suitcase s={17} />
        </Qi>
        <Qi>
          <Refresh s={17} />
        </Qi>
        <Qi>
          <CloseBox s={17} />
        </Qi>
        <Qi>
          <Binoculars s={16} />
        </Qi>
        <Qi>
          <Disk s={16} />
        </Qi>
        <Qi>
          <DiskX s={16} />
        </Qi>
        <Qi>
          <Undo s={16} />
        </Qi>
        <Qi>
          <RedX s={17} />
        </Qi>
        <Qi w="w-[32px]">
          <QatMore />
        </Qi>
      </TitleBar>
      <RibbonTabs />
      <HotelRibbon />
      <HotelForm />
      <HotelTabs />
      <div className="flex h-[24px] shrink-0 items-end justify-end bg-[#0070c5] pb-[1px] pr-[1px]">
        <Grip />
      </div>
    </div>
  );
}

export default function App() {
  return (
    <div className="relative h-[707px] w-[1368px] overflow-hidden bg-black font-['Noto_Sans',sans-serif] text-[11px] tracking-[-0.2px] text-[#444]">
      <Defs />
      <MainWindow />
      <CompanyWindow />
      <HotelWindow />
    </div>
  );
}
